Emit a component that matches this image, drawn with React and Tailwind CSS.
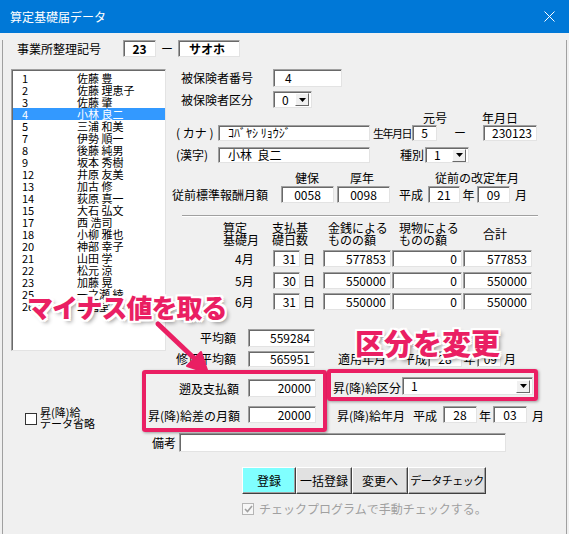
import React from 'react'

const people = [
  ['1', '佐藤 豊'], ['2', '佐藤 理恵子'], ['3', '佐藤 肇'], ['4', '小林 良二'],
  ['5', '三浦 和美'], ['7', '伊勢 順一'], ['8', '後藤 純男'], ['9', '坂本 秀樹'],
  ['12', '井原 友美'], ['13', '加古 修'], ['14', '荻原 真一'], ['15', '大石 弘文'],
  ['17', '西 浩司'], ['18', '小柳 雅也'], ['20', '神部 幸子'], ['21', '山田 学'],
  ['22', '松元 涼'], ['23', '加藤 晃'], ['25', '一之瀬 綾'], ['26', '二階堂 彰'],
]

const months = [
  ['4月', '31', '577853', '0', '577853'],
  ['5月', '30', '550000', '0', '550000'],
  ['6月', '31', '550000', '0', '550000'],
]

const sunken =
  'flex items-center shrink-0 bg-white border border-t-[#a0a0a0] border-l-[#a0a0a0] border-r-[#e3e3e3] border-b-[#e3e3e3] shadow-[inset_1px_1px_0_#696969] leading-none'

function Box({ className = '', children }) {
  return <div className={`${sunken} ${className}`}>{children}</div>
}

function Drop({ className = '', value }) {
  return (
    <div className={`${sunken} justify-between pl-[8px] pr-[2px] ${className}`}>
      <span>{value}</span>
      <span className="w-[14px] h-[13px] flex items-center justify-center bg-[#f0f0f0] border border-t-white border-l-white border-r-[#696969] border-b-[#696969]">
        <svg width="7" height="4" viewBox="0 0 7 4"><path d="M0 0h7L3.5 4z" fill="#000" /></svg>
      </span>
    </div>
  )
}

function Btn({ className = '', children }) {
  return (
    <button className={`h-[27px] flex items-center justify-center whitespace-nowrap border border-t-white border-l-white border-r-[#404040] border-b-[#404040] shadow-[inset_-1px_-1px_0_#a0a0a0] ${className}`}>
      {children}
    </button>
  )
}

function Check({ checked, disabled }) {
  return (
    <span className={`w-[12px] h-[12px] shrink-0 flex items-center justify-center border ${disabled ? 'border-[#b5b5b5] bg-[#f7f7f7]' : 'border-[#333] bg-white'}`}>
      {checked && (
        <svg width="9" height="8" viewBox="0 0 9 8"><path d="M1 4l2.5 2.5L8 1" stroke="#a0a0a0" strokeWidth="1.6" fill="none" /></svg>
      )}
    </span>
  )
}

const pinkText =
  "absolute font-black whitespace-nowrap text-[#ea1f63] leading-none [text-shadow:-2px_-2px_0_#fff,2px_-2px_0_#fff,-2px_2px_0_#fff,2px_2px_0_#fff,0_-2px_0_#fff,0_2px_0_#fff,-2px_0_0_#fff,2px_0_0_#fff,3px_3px_4px_rgba(0,0,0,0.45)]"

export default function App() {
  return (
    <div className="relative w-[569px] h-[534px] bg-[#f0f0f0] text-[12px] text-black font-['Noto_Sans_CJK_JP','Noto_Sans',sans-serif] overflow-hidden select-none">
      {/* title bar */}
      <div className="h-[33px] bg-[#0078d7] flex items-center justify-between pl-[10px] pr-[14px] text-white">
        <span className="text-[12px]">算定基礎届データ</span>
        <svg width="11" height="11" viewBox="0 0 11 11"><path d="M0.5 0.5l10 10M10.5 0.5l-10 10" stroke="#fff" strokeWidth="1" /></svg>
      </div>

      <div className="mx-[2px] h-[498px] border-x border-b border-[#a0a0a0]">
        {/* 事業所整理記号 */}
        <div className="flex items-center h-[17px] mt-[7px]">
          <span className="ml-[14px] w-[106px]">事業所整理記号</span>
          <Box className="w-[33px] h-[17px] justify-center bg-[#e3e3e3] font-bold">23</Box>
          <span className="w-[22px] text-center">ー</span>
          <Box className="w-[62px] h-[17px] pl-[10px] bg-[#e3e3e3] font-bold">サオホ</Box>
        </div>

        <div className="flex mt-[12px]">
          {/* list */}
          <div className="ml-[8px] w-[155px] h-[282px] bg-white border border-t-[#a0a0a0] border-l-[#a0a0a0] border-r-[#e3e3e3] border-b-[#e3e3e3] shadow-[inset_1px_1px_0_#696969] pt-[2px] pl-[1px] overflow-hidden">
            {people.map(([no, name]) => (
              <div key={no} className={`flex h-[12px] text-[11px] leading-[12px] ${no === '4' ? 'bg-[#3399ff] text-white' : ''}`}>
                <span className="w-[64px] pl-[9px]">{no}</span>
                <span>{name}</span>
              </div>
            ))}
          </div>

          {/* right side form */}
          <div className="ml-[6px] flex flex-col">
            <div className="flex items-center h-[18px]">
              <span className="ml-[9px] w-[92px]">被保険者番号</span>
              <Box className="w-[69px] h-[18px] pl-[11px]">4</Box>
            </div>
            <div className="flex items-center h-[17px] mt-[4px]">
              <span className="ml-[9px] w-[92px]">被保険者区分</span>
              <Drop className="w-[39px] h-[17px]" value="0" />
            </div>
            <div className="flex items-center h-[15px] mt-[2px]">
              <span className="ml-[251px] w-[59px]">元号</span>
              <span>年月日</span>
            </div>
            <div className="flex items-center h-[16px]">
              <span className="ml-[4px] w-[42px]">( カナ )</span>
              <Box className="w-[152px] h-[16px] pl-[9px]">ｺﾊﾞﾔｼ ﾘｮｳｼﾞ</Box>
              <span className="w-[42px] flex justify-end whitespace-nowrap tracking-[-1.5px] text-[11px] pr-[1px]">生年月日</span>
              <Box className="w-[25px] h-[16px] justify-center">5</Box>
              <span className="w-[46px] text-center">ー</span>
              <Box className="w-[54px] h-[16px] justify-end pr-[4px]">230123</Box>
            </div>
            <div className="flex items-center h-[16px] mt-[6px]">
              <span className="ml-[4px] w-[42px]">(漢字)</span>
              <Box className="w-[152px] h-[16px] pl-[9px]">小林&nbsp;&nbsp;良二</Box>
              <span className="w-[55px] text-right pr-[1px]">種別</span>
              <Drop className="w-[44px] h-[16px]" value="1" />
            </div>
            <div className="flex items-center h-[16px] mt-[7px]">
              <span className="ml-[123px] w-[55px]">健保</span>
              <span className="w-[85px]">厚年</span>
              <span>従前の改定年月</span>
            </div>
            <div className="flex items-center h-[17px]">
              <span className="w-[109px]">従前標準報酬月額</span>
              <Box className="w-[53px] h-[17px] justify-center">0058</Box>
              <Box className="ml-[3px] w-[53px] h-[17px] justify-center">0098</Box>
              <span className="ml-[9px] w-[29px]">平成</span>
              <Box className="w-[32px] h-[17px] justify-center">21</Box>
              <span className="w-[17px] text-center">年</span>
              <Box className="w-[33px] h-[17px] justify-center">09</Box>
              <span className="ml-[5px]">月</span>
            </div>
            <div className="ml-[10px] w-[356px] h-[2px] mt-[12px] border-t border-t-[#a0a0a0] border-b border-b-white" />
            <div className="flex h-[24px] mt-[5px] leading-[12px]">
              <span className="ml-[51px] w-[49px]">算定<br />基礎月</span>
              <span className="w-[56px]">支払基<br />礎日数</span>
              <span className="w-[71px]">金銭による<br />ものの額</span>
              <span className="w-[84px]">現物による<br />ものの額</span>
              <span className="self-center">合計</span>
            </div>
            {months.map(([m, d, a, b, c], i) => (
              <div key={m} className={`flex items-center h-[17px] ${i === 1 ? 'mt-[5px]' : 'mt-[4px]'}`}>
                <span className="ml-[63px] w-[38px]">{m}</span>
                <Box className="w-[27px] h-[17px] justify-end pr-[3px]">{d}</Box>
                <span className="w-[23px] pl-[3px]">日</span>
                <Box className="w-[68px] h-[17px] justify-end pr-[4px]">{a}</Box>
                <Box className="ml-[1px] w-[70px] h-[17px] justify-end pr-[4px]">{b}</Box>
                <Box className="ml-[1px] w-[69px] h-[17px] justify-end pr-[4px]">{c}</Box>
              </div>
            ))}
            <div className="flex items-center h-[18px] mt-[19px]">
              <span className="w-[76px] text-right pr-[12px]">平均額</span>
              <Box className="w-[67px] h-[18px] justify-end pr-[4px]">559284</Box>
            </div>
            <div className="flex items-center h-[16px] mt-[4px]">
              <span className="w-[76px] text-right pr-[12px]">修正平均額</span>
              <Box className="w-[67px] h-[16px] justify-end pr-[4px]">565951</Box>
              <span className="ml-[23px] w-[65px]">適用年月</span>
              <span className="w-[25px]">平成</span>
              <Box className="w-[34px] h-[16px] justify-center">28</Box>
              <span className="w-[15px] text-center">年</span>
              <Box className="w-[24px] h-[16px] justify-end pr-[3px]">09</Box>
              <span className="ml-[3px]">月</span>
            </div>
          </div>
        </div>

        {/* 遡及支払額 / 昇(降)給区分 */}
        <div className="flex items-start h-[20px] mt-[10px]">
          <span className="w-[245px] text-right pr-[9px] mt-[3px]">遡及支払額</span>
          <Box className="mt-[2px] w-[68px] h-[18px] justify-end pr-[4px]">20000</Box>
          <span className="ml-[17px] w-[69px] mt-[2px]">昇(降)給区分</span>
          <Drop className="w-[131px] h-[18px]" value="1" />
        </div>

        {/* 昇(降)給差の月額 / 昇(降)給年月 */}
        <div className="flex items-start h-[23px] mt-[9px]">
          <div className="ml-[22px] w-[223px] flex justify-between">
            <div className="flex items-start gap-[3px] mt-[1px]">
              <span className="mt-[6px]"><Check /></span>
              <span className="text-[11px] leading-[11px]">昇(降)給<br />データ省略</span>
            </div>
            <span className="pr-[8px] mt-[1px]">昇(降)給差の月額</span>
          </div>
          <Box className="w-[68px] h-[17px] justify-end pr-[4px]">20000</Box>
          <span className="ml-[21px] w-[76px] mt-[1px]">昇(降)給年月</span>
          <span className="w-[30px] mt-[1px]">平成</span>
          <Box className="w-[34px] h-[17px] justify-center">28</Box>
          <span className="w-[16px] text-center mt-[1px]">年</span>
          <Box className="w-[34px] h-[17px] justify-center">03</Box>
          <span className="ml-[5px] mt-[1px]">月</span>
        </div>

        {/* 備考 */}
        <div className="flex items-center h-[19px] mt-[4px]">
          <span className="w-[176px] text-right pr-[3px]">備考</span>
          <Box className="w-[327px] h-[19px]" />
        </div>

        {/* buttons */}
        <div className="flex ml-[239px] mt-[15px]">
          <Btn className="w-[54px] bg-[#80ffff]">登録</Btn>
          <Btn className="w-[56px] bg-[#e1e1e1]">一括登録</Btn>
          <Btn className="w-[56px] bg-[#e1e1e1]">変更へ</Btn>
          <Btn className="w-[78px] bg-[#e1e1e1] text-[11px] tracking-[-0.5px]">データチェック</Btn>
        </div>

        <div className="flex items-center gap-[5px] ml-[239px] mt-[9px] h-[12px] text-[#a0a0a0]">
          <Check checked disabled />
          <span>チェックプログラムで手動チェックする。</span>
        </div>
      </div>

      {/* annotations */}
      <div className="absolute left-[142px] top-[370px] w-[185px] h-[62px] border-4 border-[#ea1f63] rounded-[3px] shadow-[1px_1px_3px_rgba(0,0,0,0.35)]" />
      <div className="absolute left-[327px] top-[369px] w-[211px] h-[32px] border-4 border-[#ea1f63] rounded-[3px] shadow-[1px_1px_3px_rgba(0,0,0,0.35)]" />
      <svg className="absolute left-0 top-0" width="569" height="534" viewBox="0 0 569 534">
        <line x1="158" y1="324" x2="196" y2="360" stroke="#ea1f63" strokeWidth="5" strokeLinecap="round" />
        <path d="M208 373 L187 366 L201 352 Z" fill="#ea1f63" stroke="#ea1f63" strokeWidth="2" strokeLinejoin="round" />
      </svg>
      <span className={`${pinkText} left-[27px] top-[294px] text-[26px] tracking-[-1px]`}>マイナス値を取る</span>
      <span className={`${pinkText} left-[355px] top-[328px] text-[29px]`}>区分を変更</span>
    </div>
  )
}
